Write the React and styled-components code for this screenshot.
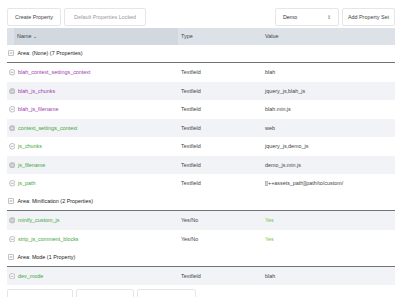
import React from 'react';
import styled, { createGlobalStyle } from 'styled-components';

const GlobalStyle = createGlobalStyle`
  html, body { margin: 0; padding: 0; background: #fff; }
  body { font-family: "Liberation Sans", Arial, sans-serif; color: #333; }
`;

const areas = [
  {
    title: 'Area: (None) (7 Properties)',
    rows: [
      { name: 'blah_context_settings_context', type: 'Textfield', value: 'blah', own: true },
      { name: 'blah_js_chunks', type: 'Textfield', value: 'jquery_js,blah_js', own: true, alt: true },
      { name: 'blah_js_filename', type: 'Textfield', value: 'blah.min.js', own: true },
      { name: 'context_settings_context', type: 'Textfield', value: 'web', alt: true },
      { name: 'js_chunks', type: 'Textfield', value: 'jquery_js,demo_js' },
      { name: 'js_filename', type: 'Textfield', value: 'demo_js.min.js', alt: true },
      { name: 'js_path', type: 'Textfield', value: '[[++assets_path]]path/to/custom/' },
    ],
  },
  {
    title: 'Area: Minification (2 Properties)',
    rows: [
      { name: 'minify_custom_js', type: 'Yes/No', value: 'Yes', yes: true, alt: true },
      { name: 'strip_js_comment_blocks', type: 'Yes/No', value: 'Yes', yes: true },
    ],
  },
  {
    title: 'Area: Mode (1 Property)',
    rows: [{ name: 'dev_mode', type: 'Textfield', value: 'blah', alt: true, outline: true }],
  },
];

const RowIcon = ({ filled }) => (
  <svg width="6.5" height="6.5" viewBox="0 0 7 7">
    <circle cx="3.5" cy="3.5" r="3" fill={filled ? '#c4c6ca' : '#fff'} stroke={filled ? '#b4b6ba' : '#9a9ca0'} strokeWidth="0.7" />
    <line x1="1.9" y1="3.5" x2="5.1" y2="3.5" stroke={filled ? '#f4f4f4' : '#8a8c90'} strokeWidth="0.7" />
  </svg>
);

const AreaIcon = () => (
  <svg width="6" height="6" viewBox="0 0 6 6">
    <rect x="0.4" y="0.4" width="5.2" height="5.2" rx="0.8" fill="#fff" stroke="#8a8c90" strokeWidth="0.6" />
    <line x1="1.6" y1="3" x2="4.4" y2="3" stroke="#6a6c70" strokeWidth="0.6" />
  </svg>
);

export default function App() {
  return (
    <Page>
      <GlobalStyle />
      <Toolbar>
        <Button>Create Property</Button>
        <Button $muted>Default Properties Locked</Button>
        <Spacer />
        <Select>
          <span>Demo</span>
          <span className="arrows">⇕</span>
        </Select>
        <Button $tight>Add Property Set</Button>
      </Toolbar>
      <Table>
        <HeaderRow>
          <HeadCell $dark>Name ⌄</HeadCell>
          <HeadCell>Type</HeadCell>
          <HeadCell>Value</HeadCell>
        </HeaderRow>
        {areas.map((area) => (
          <React.Fragment key={area.title}>
            <AreaRow>
              <AreaIcon />
              <span>{area.title}</span>
            </AreaRow>
            {area.rows.map((r) => (
              <Row key={r.name} $alt={r.alt}>
                <NameCell $own={r.own}>
                  <RowIcon filled={r.alt && !r.outline} />
                  <span>{r.name}</span>
                </NameCell>
                <Cell>{r.type}</Cell>
                <Cell $yes={r.yes}>{r.value}</Cell>
              </Row>
            ))}
          </React.Fragment>
        ))}
      </Table>
      <Footer>
        <FootButton $w={64} />
        <FootButton $w={56} />
        <FootButton $w={57} />
      </Footer>
    </Page>
  );
}

const Page = styled.div`
  width: 400px;
  height: 297px;
  overflow: hidden;
  box-sizing: border-box;
  padding: 8px 5px 0 7px;
  font-size: 5.4px;
`;

const Toolbar = styled.div`
  display: flex;
  gap: 3px;
  height: 18px;
  margin-bottom: 1.5px;
`;

const Spacer = styled.div`
  flex: 1;
`;

const Button = styled.div`
  display: flex;
  align-items: center;
  padding: 0 ${(p) => (p.$muted ? '9px' : p.$tight ? '5px' : '7px')};
  border: 0.8px solid #e6e6e8;
  border-radius: 2px;
  background: #fff;
  color: ${(p) => (p.$muted ? '#9a9a9a' : '#444')};
  white-space: nowrap;
`;

const Select = styled(Button)`
  width: 64px;
  box-sizing: border-box;
  justify-content: space-between;
  color: #333;
  .arrows {
    font-size: 4.5px;
    color: #777;
  }
`;

const Table = styled.div`
  display: flex;
  flex-direction: column;
`;

const grid = `
  display: grid;
  grid-template-columns: 171px 84px 1fr;
`;

const HeaderRow = styled.div`
  ${grid}
  height: 17px;
  background: #dde2e8;
  color: #444;
`;

const HeadCell = styled.div`
  display: flex;
  align-items: center;
  padding-left: ${(p) => (p.$dark ? '10px' : '3px')};
  background: ${(p) =>
    p.$dark ? 'linear-gradient(to right, #dde2e8 7px, #d1d8e0 7px)' : 'transparent'};
`;

const AreaRow = styled.div`
  display: flex;
  align-items: center;
  gap: 3.5px;
  height: 17.5px;
  padding-left: 1px;
  border-bottom: 1.5px solid #6f7277;
  color: #222;
  font-size: 5.4px;
`;

const Row = styled.div`
  ${grid}
  height: 18.5px;
  background: ${(p) => (p.$alt ? '#f2f3f6' : '#fff')};
`;

const Cell = styled.div`
  display: flex;
  align-items: center;
  padding-left: 3px;
  color: ${(p) => (p.$yes ? '#79bf3f' : '#444')};
`;

const NameCell = styled.div`
  display: flex;
  align-items: center;
  gap: 3px;
  padding-left: 1.5px;
  color: ${(p) => (p.$own ? '#a03bb0' : '#3ea63a')};
`;

const Footer = styled.div`
  display: flex;
  gap: 3px;
  margin-top: 4px;
`;

const FootButton = styled.div`
  width: ${(p) => p.$w}px;
  height: 16px;
  border: 0.8px solid #e6e6e8;
  border-radius: 2px;
`;
